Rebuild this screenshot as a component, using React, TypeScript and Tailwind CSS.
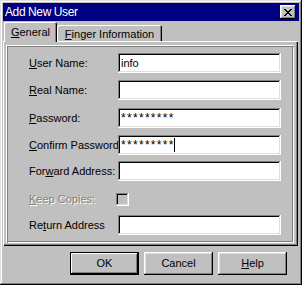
import React from "react";

const raised =
  "shadow-[inset_-1px_-1px_#000,inset_1px_1px_#fff,inset_-2px_-2px_#808080,inset_2px_2px_#dfdfdf]";
const sunken =
  "shadow-[inset_-1px_-1px_#fff,inset_1px_1px_#808080,inset_-2px_-2px_#dfdfdf,inset_2px_2px_#000]";

function U({ children }: { children: React.ReactNode }) {
  return <span className="underline underline-offset-[1px]">{children}</span>;
}

function Field({ value, caret }: { value?: string; caret?: boolean }) {
  const stars = value && value.startsWith("*");
  return (
    <div className={`flex h-[20px] w-[163px] items-center bg-white pl-[3px] ${sunken}`}>
      {value && (
        <span className={stars ? "text-[12px] tracking-[1.3px]" : ""}>{value}</span>
      )}
      {caret && <span className="ml-[-1px] h-[14px] w-px bg-black" />}
    </div>
  );
}

function Row({
  label,
  className,
  children,
}: {
  label: React.ReactNode;
  className: string;
  children: React.ReactNode;
}) {
  return (
    <div className={`flex items-center ${className}`}>
      <div className="w-[89px] overflow-hidden whitespace-nowrap">{label}</div>
      {children}
    </div>
  );
}

function Button({
  children,
  primary,
}: {
  children: React.ReactNode;
  primary?: boolean;
}) {
  return (
    <div
      className={`flex h-[23px] w-[69px] items-center justify-center bg-[#c0c0c0] ${
        primary
          ? "border border-black shadow-[inset_-1px_-1px_#000,inset_1px_1px_#fff,inset_-2px_-2px_#808080]"
          : raised
      }`}
    >
      {children}
    </div>
  );
}

export default function App() {
  return (
    <div className="h-[288px] w-[302px] bg-white font-['Liberation_Sans',Arial,sans-serif] text-[11px] text-black">
      <div className="flex h-[285px] w-[302px] flex-col bg-[#c0c0c0] p-[3px] shadow-[inset_-1px_-1px_#000,inset_1px_1px_#dfdfdf,inset_-2px_-2px_#808080,inset_2px_2px_#fff]">
        {/* title bar */}
        <div className="flex h-[18px] items-center justify-between bg-[#000080] pl-[2px] pr-[3px]">
          <span className="text-[12px] tracking-[-0.4px] text-white">Add New User</span>
          <div className={`flex h-[14px] w-[16px] items-center justify-center bg-[#c0c0c0] ${raised}`}>
            <svg width="8" height="7" viewBox="0 0 8 7" shapeRendering="crispEdges">
              <path
                d="M0 0h2v1h-2zM6 0h2v1h-2zM1 1h2v1h-2zM5 1h2v1h-2zM2 2h4v1h-4zM3 3h2v1h-2zM2 4h4v1h-4zM1 5h2v1h-2zM5 5h2v1h-2zM0 6h2v1h-2zM6 6h2v1h-2z"
                fill="#000"
              />
            </svg>
          </div>
        </div>

        {/* tabs */}
        <div className="mt-[1px] flex h-[19px] items-end">
          <div className="relative z-10 -mb-px ml-[1px] flex h-[20px] w-[53px] items-start justify-center rounded-t-[2px] bg-[#c0c0c0] pt-[2px] shadow-[inset_1px_1px_#fff,inset_-1px_0_#000,inset_-2px_0_#808080]">
            <span>
              <U>G</U>eneral
            </span>
          </div>
          <div className="flex h-[16px] w-[105px] items-start justify-center rounded-t-[2px] pt-px shadow-[inset_1px_1px_#fff,inset_-1px_0_#000,inset_-2px_0_#808080]">
            <span>
              <U>F</U>inger Information
            </span>
          </div>
        </div>

        {/* tab panel */}
        <div className="mr-[1px] flex h-[205px] flex-col pb-[3px] pl-[3px] pr-[4px] pt-[4px] shadow-[inset_1px_1px_#fff,inset_-1px_-1px_#000,inset_-2px_-2px_#808080]">
          <div className="flex flex-1 flex-col pl-[23px] shadow-[inset_1px_1px_#fff,inset_2px_2px_#808080,inset_-1px_-1px_#fff,inset_-2px_-2px_#808080]">
            <Row label={<><U>U</U>ser Name:</>} className="mt-[8px]">
              <Field value="info" />
            </Row>
            <Row label={<><U>R</U>eal Name:</>} className="mt-[7px]">
              <Field />
            </Row>
            <Row label={<><U>P</U>assword:</>} className="mt-[8px]">
              <Field value="*********" />
            </Row>
            <Row label={<><U>C</U>onfirm Password</>} className="mt-[7px]">
              <Field value="*********" caret />
            </Row>
            <Row label={<>For<U>w</U>ard Address:</>} className="mt-[6px]">
              <Field />
            </Row>
            <Row
              label={
                <span className="text-[#808080] [text-shadow:1px_1px_#fff]">
                  <U>K</U>eep Copies:
                </span>
              }
              className="mt-[8px] h-[20px]"
            >
              <div className="-ml-[2px] h-[13px] w-[13px] bg-[#c0c0c0] shadow-[inset_-1px_-1px_#fff,inset_1px_1px_#808080,inset_-2px_-2px_#dfdfdf,inset_2px_2px_#000]" />
            </Row>
            <Row label={<>Re<U>t</U>urn Address</>} className="mt-[6px]">
              <Field />
            </Row>
          </div>
        </div>

        {/* buttons */}
        <div className="mt-[6px] flex justify-end gap-[5px] pr-[12px]">
          <Button primary>OK</Button>
          <Button>Cancel</Button>
          <Button>
            <span>
              <U>H</U>elp
            </span>
          </Button>
        </div>
      </div>
    </div>
  );
}
